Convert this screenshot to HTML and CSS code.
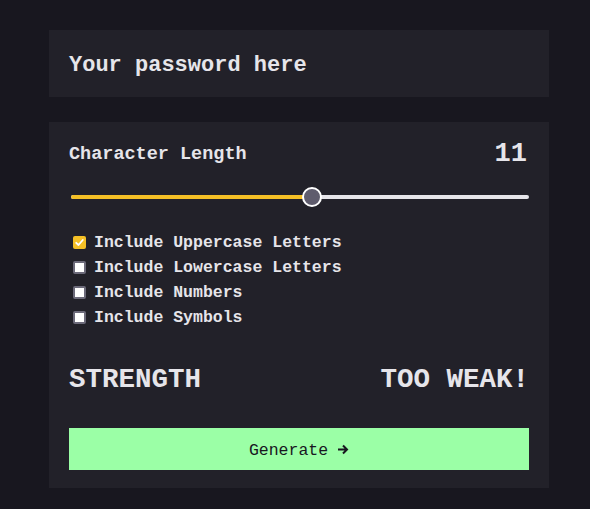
FILE: index.html
```html
<!DOCTYPE html>
<html lang="en">
<head>
<meta charset="utf-8">
<title>Password Generator</title>
<link rel="stylesheet" href="styles.css">
</head>
<body>
<main class="app">
  <div class="output">Your password here</div>
  <section class="card">
    <div class="length-row">
      <span class="length-label">Character Length</span>
      <span class="length-value">11</span>
    </div>
    <div class="slider">
      <div class="track">
        <div class="fill" style="width: 52.7%"></div>
        <div class="thumb" style="left: 52.7%"></div>
      </div>
    </div>
    <ul class="options">
      <li class="option"><span class="box checked"><svg viewBox="0 0 13 13" width="13" height="13"><path d="M3.2 6.8 L5.5 9 L9.8 4" fill="none" stroke="#fff" stroke-width="1.8" stroke-linecap="round" stroke-linejoin="round"/></svg></span>Include Uppercase Letters</li>
      <li class="option"><span class="box"></span>Include Lowercase Letters</li>
      <li class="option"><span class="box"></span>Include Numbers</li>
      <li class="option"><span class="box"></span>Include Symbols</li>
    </ul>
    <div class="strength">
      <span>STRENGTH</span>
      <span>TOO WEAK!</span>
    </div>
    <button class="generate"><span>Generate</span><svg class="arrow" viewBox="0 0 12 11" width="12" height="11"><path d="M1 5.5 H10 M6 1.5 L10 5.5 L6 9.5" fill="none" stroke="#18171f" stroke-width="2"/></svg></button>
  </section>
</main>
</body>
</html>
```
FILE: styles.css
```css
* { box-sizing: border-box; }
body {
  margin: 0;
  background: #18171f;
  color: #e6e5ea;
  font-family: "Liberation Mono", "DejaVu Sans Mono", monospace;
}
.app {
  width: 500px;
  margin-left: 49px;
  padding-top: 30px;
  display: flex;
  flex-direction: column;
  gap: 25px;
}
.output {
  height: 67px;
  background: #222129;
  padding: 4px 20px 0;
  display: flex;
  align-items: center;
  font-size: 22px;
  font-weight: bold;
  color: #e6e5ea;
}
.card {
  background: #222129;
  padding: 21px 20px 18px;
  display: flex;
  flex-direction: column;
}
.length-row {
  height: 22px;
  display: flex;
  justify-content: space-between;
  align-items: center;
}
.length-label {
  font-size: 18.5px;
  font-weight: bold;
}
.length-value {
  font-size: 27px;
  font-weight: bold;
  margin-right: 2px;
}
.slider {
  margin-top: 22px;
  height: 20px;
  display: flex;
  align-items: center;
  padding: 0 0 0 2px;
}
.track {
  position: relative;
  width: 459px;
  height: 4px;
  border-radius: 2px;
  background: #e6e5ea;
}
.fill {
  height: 100%;
  border-radius: 2px;
  background: #f5c026;
}
.thumb {
  position: absolute;
  top: 50%;
  width: 20px;
  height: 20px;
  margin: -10px 0 0 -10px;
  border-radius: 50%;
  background: #5f5c6d;
  border: 2px solid #fff;
}
.options {
  list-style: none;
  margin: 23px 0 0;
  padding: 0;
}
.option {
  height: 25px;
  display: flex;
  align-items: center;
  gap: 8px;
  padding-left: 4px;
  font-size: 16.5px;
  font-weight: bold;
}
.box {
  width: 13px;
  height: 13px;
  border-radius: 2px;
  background: #fff;
  border: 2px solid #6c6a7a;
  display: flex;
  flex: none;
}
.box.checked {
  background: #f5c026;
  border: none;
}
.strength {
  margin-top: 33px;
  height: 32px;
  display: flex;
  justify-content: space-between;
  align-items: center;
  font-size: 27.5px;
  font-weight: bold;
}
.generate {
  margin-top: 33px;
  height: 42px;
  border: none;
  background: #9bffa6;
  color: #18171f;
  font-family: "Liberation Mono", "DejaVu Sans Mono", monospace;
  font-size: 16.5px;
  display: flex;
  align-items: center;
  justify-content: center;
  gap: 9px;
  padding: 2px 0 0;
}
.arrow {
  display: block;
  margin-top: -1px;
}
```
